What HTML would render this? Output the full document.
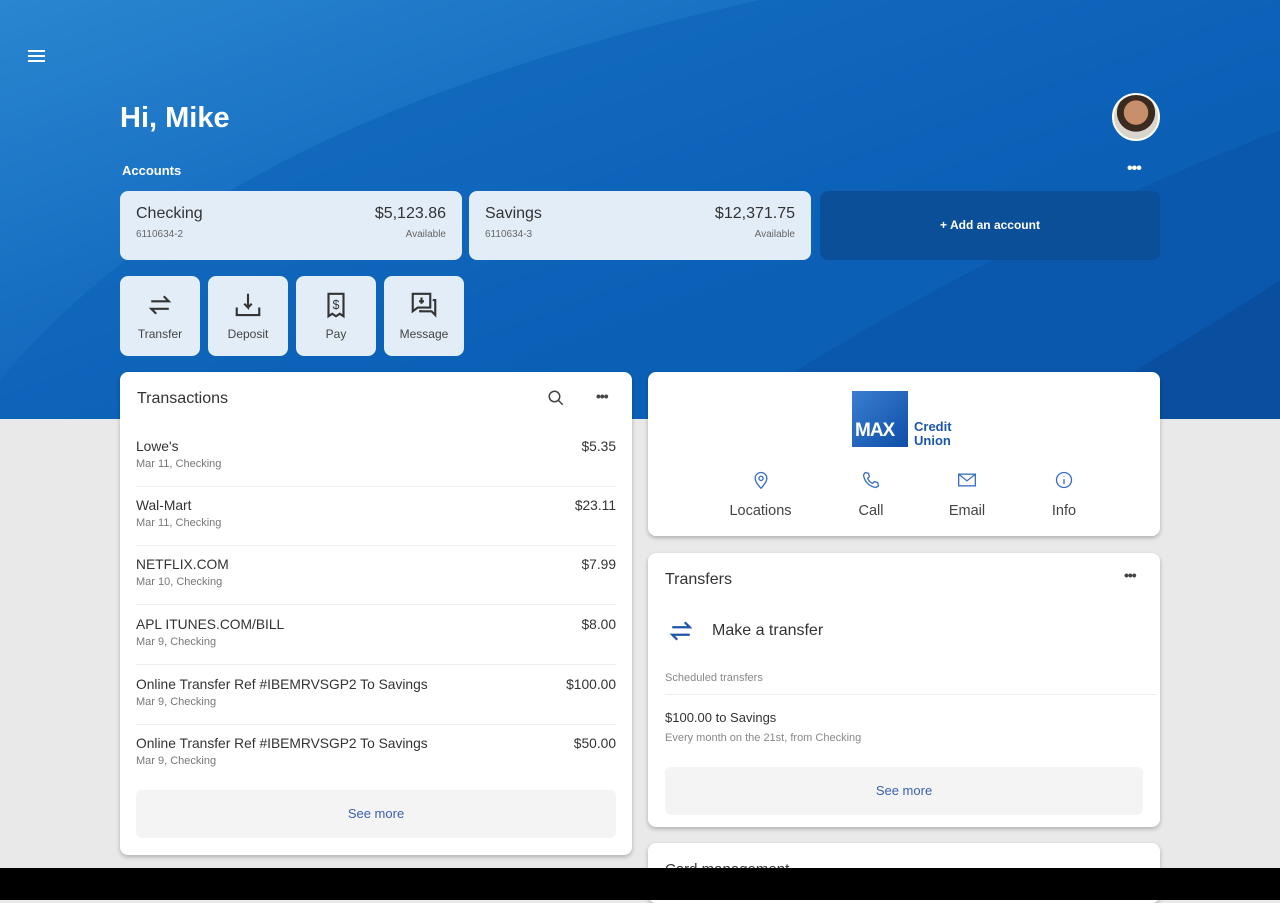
<!DOCTYPE html>
<html><head><style>
*{box-sizing:border-box;margin:0;padding:0}
body{width:1280px;height:900px;overflow:hidden;background:#e9e9e9;font-family:"Liberation Sans",sans-serif;position:relative}
.hdr{position:absolute;left:0;top:0;width:1280px;height:419px;background:linear-gradient(160deg,#2a86d0 0%,#1a72c4 30%,#0b5fb6 60%,#0a58ad 100%);overflow:hidden}
.hdr svg{position:absolute;left:0;top:0}
.ab{position:absolute}
.card{position:absolute;background:#fff;border-radius:8px;box-shadow:0 2px 4px rgba(0,0,0,.25)}
.acc{position:absolute;top:191px;height:69px;background:#e3edf8;border-radius:8px;padding:14px 16px;color:#333}
.acc .t{display:flex;justify-content:space-between;font-size:16px}
.acc .s{display:flex;justify-content:space-between;font-size:10px;color:#666;margin-top:6px}
.qa{position:absolute;top:276px;width:80px;height:80px;background:#e3edf8;border-radius:8px;text-align:center;font-size:12px;color:#444}
.qa svg{display:block;margin:14px auto 7px}
.tx{position:absolute;left:16px;right:16px;height:59px;border-bottom:1px solid #eee;font-size:13.8px;color:#333}
.tx .r{display:flex;justify-content:space-between;margin-top:11px}
.tx .d{font-size:11px;color:#777;margin-top:4px}
.btn{position:absolute;background:#f4f4f4;border-radius:6px;text-align:center;color:#3b5fb0;font-size:13px}
</style></head><body>
<div class="hdr">
<svg width="1280" height="419"><path d="M0 380 C150 200 400 80 760 0 L1280 0 L1280 419 L0 419Z" fill="#0c62b8" opacity=".6"/><path d="M720 419 C900 300 1100 200 1280 130 L1280 419Z" fill="#0a56aa" opacity=".7"/><path d="M1060 419 C1150 360 1220 320 1280 280 L1280 419Z" fill="#0a4f9f"/></svg>
</div>
<div class="ab" style="left:28px;top:50px;width:17px"><div style="height:2px;background:#fff;margin-bottom:3px"></div><div style="height:2px;background:#fff;margin-bottom:3px"></div><div style="height:2px;background:#fff"></div></div>
<div class="ab" style="left:120px;top:102px;color:#fff;font-size:29px;font-weight:bold">Hi, Mike</div>
<div class="ab" style="left:1112px;top:93px;width:48px;height:48px;border-radius:50%;background:radial-gradient(circle at 50% 40%,#c8906a 0 35%,#3a2a20 36% 55%,#d9d4cc 56%);border:2px solid #fff"></div>
<div class="ab" style="left:122px;top:163px;color:#fff;font-size:13px;font-weight:bold">Accounts</div>
<div class="ab" style="left:1127px;top:160px;color:#fff;font-size:16px;font-weight:bold;letter-spacing:-1px">•••</div>
<div class="acc" style="left:120px;width:342px"><div class="t"><span>Checking</span><span>$5,123.86</span></div><div class="s"><span>6110634-2</span><span>Available</span></div></div>
<div class="acc" style="left:469px;width:342px"><div class="t"><span>Savings</span><span>$12,371.75</span></div><div class="s"><span>6110634-3</span><span>Available</span></div></div>
<div class="ab" style="left:820px;top:191px;width:340px;height:69px;background:#0b4f99;border-radius:8px;color:#fff;font-size:12px;font-weight:bold;text-align:center;line-height:69px">+ Add an account</div>
<div class="qa" style="left:120px"><svg width="30" height="30" viewBox="0 0 24 24" fill="none" stroke="#333" stroke-width="1.7"><path d="M5 9h14l-4-4M19 15H5l4 4"/></svg>Transfer</div>
<div class="qa" style="left:208px"><svg width="30" height="30" viewBox="0 0 24 24" fill="none" stroke="#333" stroke-width="1.7"><path d="M12 3v11l-3-3M12 14l3-3M3 14v6h18v-6"/></svg>Deposit</div>
<div class="qa" style="left:296px"><svg width="30" height="30" viewBox="0 0 24 24" fill="none" stroke="#333" stroke-width="1.7"><path d="M6 3h12v18l-3-2-3 2-3-2-3 2z"/><text x="12" y="15" font-size="10" text-anchor="middle" fill="#333" stroke="none">$</text></svg>Pay</div>
<div class="qa" style="left:384px"><svg width="30" height="30" viewBox="0 0 24 24" fill="none" stroke="#333" stroke-width="1.7"><path d="M3 3h14v11H7l-4 3zM19 8h2v12l-3-3h-9v-1M10 6v5M8 9h4"/></svg>Message</div>

<div class="card" style="left:120px;top:372px;width:512px;height:483px">
<div class="ab" style="left:17px;top:18px;font-size:16px;color:#333">Transactions</div>
<svg class="ab" style="left:427px;top:17px" width="18" height="18" viewBox="0 0 24 24" fill="none" stroke="#444" stroke-width="2"><circle cx="10" cy="10" r="7"/><path d="M15 15l6 6"/></svg>
<div class="ab" style="left:476px;top:16px;font-size:14px;color:#444;font-weight:bold;letter-spacing:-1px">•••</div>
<div class="tx" style="top:56px"><div class="r"><span>Lowe's</span><span>$5.35</span></div><div class="d">Mar 11, Checking</div></div>
<div class="tx" style="top:115px"><div class="r"><span>Wal-Mart</span><span>$23.11</span></div><div class="d">Mar 11, Checking</div></div>
<div class="tx" style="top:174px"><div class="r"><span>NETFLIX.COM</span><span>$7.99</span></div><div class="d">Mar 10, Checking</div></div>
<div class="tx" style="top:234px"><div class="r"><span>APL ITUNES.COM/BILL</span><span>$8.00</span></div><div class="d">Mar 9, Checking</div></div>
<div class="tx" style="top:294px"><div class="r"><span>Online Transfer Ref #IBEMRVSGP2 To Savings</span><span>$100.00</span></div><div class="d">Mar 9, Checking</div></div>
<div class="tx" style="top:353px;border:none"><div class="r"><span>Online Transfer Ref #IBEMRVSGP2 To Savings</span><span>$50.00</span></div><div class="d">Mar 9, Checking</div></div>
<div class="btn" style="left:16px;top:418px;width:480px;height:48px;line-height:48px">See more</div>
</div>

<div class="card" style="left:648px;top:372px;width:512px;height:164px">
<div class="ab" style="left:204px;top:19px;width:56px;height:56px;background:linear-gradient(135deg,#3a7fd0,#0d4ea8);color:#fff;font-weight:bold;font-size:19px;letter-spacing:-1px;padding-top:29px;padding-left:3px">MAX</div>
<div class="ab" style="left:266px;top:48px;color:#1c56a8;font-weight:bold;font-size:13px;line-height:14px">Credit<br>Union</div>
<svg class="ab" style="left:103px;top:98px" width="20" height="20" viewBox="0 0 24 24" fill="none" stroke="#3a6fc0" stroke-width="1.6"><path d="M12 22s7-7 7-12a7 7 0 0 0-14 0c0 5 7 12 7 12z"/><circle cx="12" cy="10" r="2.5"/></svg>
<svg class="ab" style="left:213px;top:98px" width="20" height="20" viewBox="0 0 24 24" fill="none" stroke="#3a6fc0" stroke-width="1.6"><path d="M5 3l4 1 1 4-2 2c1 3 3 5 6 6l2-2 4 1 1 4-3 2C10 20 4 14 3 6z"/></svg>
<svg class="ab" style="left:308px;top:98px" width="22" height="20" viewBox="0 0 24 24" fill="none" stroke="#3a6fc0" stroke-width="1.6"><rect x="2" y="5" width="20" height="14"/><path d="M2 5l10 8 10-8"/></svg>
<svg class="ab" style="left:406px;top:98px" width="20" height="20" viewBox="0 0 24 24" fill="none" stroke="#3a6fc0" stroke-width="1.6"><circle cx="12" cy="12" r="9"/><path d="M12 11v6M12 7v1"/></svg>
<div class="ab" style="left:65px;top:131px;width:95px;text-align:center;font-size:14.5px;color:#444">Locations</div>
<div class="ab" style="left:193px;top:131px;width:60px;text-align:center;font-size:14.5px;color:#444">Call</div>
<div class="ab" style="left:289px;top:131px;width:60px;text-align:center;font-size:14.5px;color:#444">Email</div>
<div class="ab" style="left:386px;top:131px;width:60px;text-align:center;font-size:14.5px;color:#444">Info</div>
</div>

<div class="card" style="left:648px;top:553px;width:512px;height:274px">
<div class="ab" style="left:17px;top:18px;font-size:16px;color:#333">Transfers</div>
<div class="ab" style="left:476px;top:14px;font-size:14px;color:#444;font-weight:bold;letter-spacing:-1px">•••</div>
<svg class="ab" style="left:18px;top:63px" width="30" height="30" viewBox="0 0 24 24" fill="none" stroke="#1c56a8" stroke-width="1.8"><path d="M5 9h14l-4-4M19 15H5l4 4"/></svg>
<div class="ab" style="left:64px;top:69px;font-size:16px;color:#333">Make a transfer</div>
<div class="ab" style="left:17px;top:119px;font-size:11px;color:#888">Scheduled transfers</div>
<div class="ab" style="left:17px;top:141px;width:492px;border-top:1px solid #eee"></div>
<div class="ab" style="left:17px;top:157px;font-size:13px;color:#333">$100.00 to Savings</div>
<div class="ab" style="left:17px;top:179px;font-size:11px;color:#888">Every month on the 21st, from Checking</div>
<div class="btn" style="left:17px;top:214px;width:478px;height:48px;line-height:48px">See more</div>
</div>

<div class="card" style="left:648px;top:843px;width:512px;height:60px">
<div class="ab" style="left:17px;top:18px;font-size:15px;color:#333">Card management</div>
</div>
<div class="ab" style="left:0;top:868px;width:1280px;height:32px;background:#000"></div>
</body></html>
